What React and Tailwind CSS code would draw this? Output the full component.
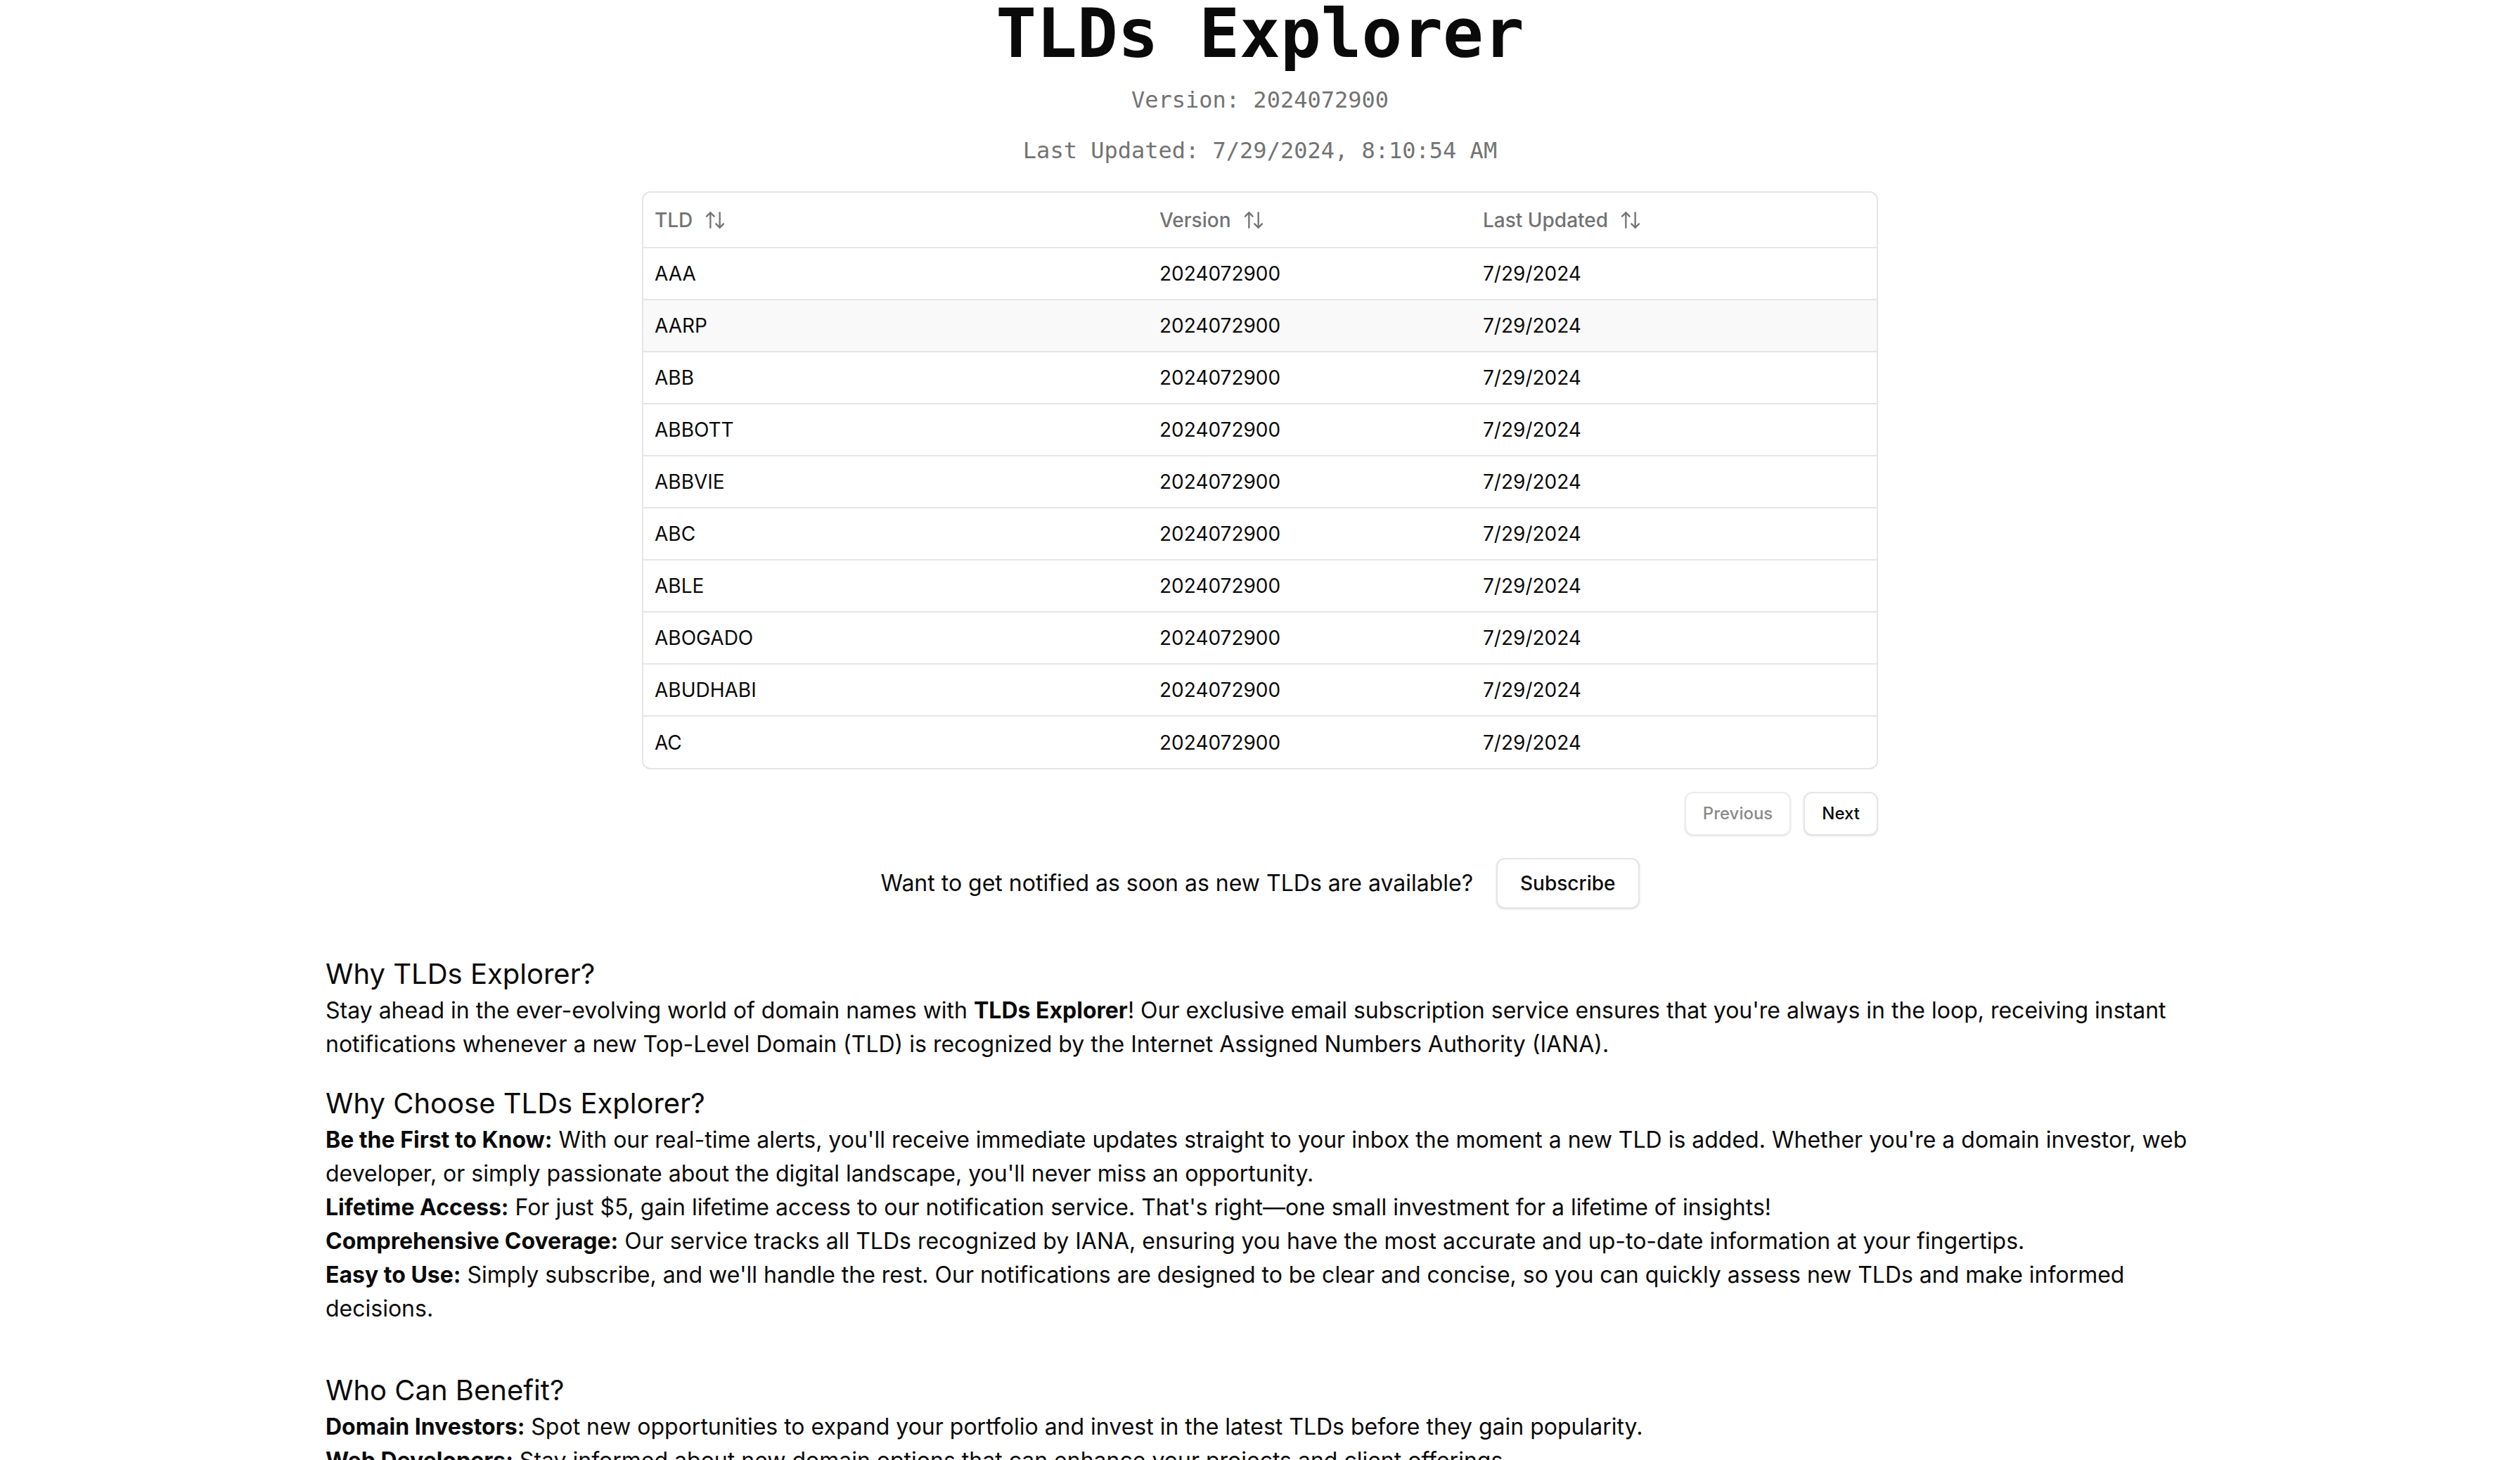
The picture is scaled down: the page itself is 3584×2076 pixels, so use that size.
import { ArrowUpDown } from 'lucide-react'

const tlds = ['AAA', 'AARP', 'ABB', 'ABBOTT', 'ABBVIE', 'ABC', 'ABLE', 'ABOGADO', 'ABUDHABI', 'AC']

function SortHead({ label, className }) {
  return (
    <th className={`h-[78px] px-4 text-left align-middle font-medium text-[#737373] ${className}`}>
      <span className="inline-flex items-center">
        {label}
        <ArrowUpDown className="ml-4 h-8 w-8" strokeWidth={1.75} />
      </span>
    </th>
  )
}

export default function App() {
  return (
    <div className="min-h-screen bg-white font-['Inter',sans-serif] text-[#0a0a0a]">
      <div className="flex flex-col items-center">
        {/* Title block */}
        <h1 className="font-['DejaVu_Sans_Mono',monospace] text-8xl font-bold leading-none">TLDs Explorer</h1>
        <p className="mt-[22px] font-['DejaVu_Sans_Mono',monospace] text-[32px] leading-[48px] text-[#737373]">
          Version: 2024072900
        </p>
        <p className="mt-6 font-['DejaVu_Sans_Mono',monospace] text-[32px] leading-[48px] text-[#737373]">
          Last Updated: 7/29/2024, 8:10:54 AM
        </p>

        {/* Table */}
        <div className="mt-[34px] w-[1758px] overflow-hidden rounded-[12px] border-2 border-[#e5e5e5]">
          <table className="w-full border-collapse text-[28px]">
            <thead>
              <tr className="border-b-2 border-[#e5e5e5]">
                <SortHead label="TLD" className="w-[718px]" />
                <SortHead label="Version" className="w-[460px]" />
                <SortHead label="Last Updated" />
              </tr>
            </thead>
            <tbody>
              {tlds.map((tld, i) => (
                <tr
                  key={tld}
                  className={`${i < tlds.length - 1 ? 'border-b-2 border-[#e5e5e5]' : ''} ${i === 1 ? 'bg-[#f9f9f9]' : ''}`}
                >
                  <td className="h-[74px] px-4 align-middle">{tld}</td>
                  <td className="h-[74px] px-4 align-middle">2024072900</td>
                  <td className="h-[74px] px-4 align-middle">7/29/2024</td>
                </tr>
              ))}
            </tbody>
          </table>
        </div>

        {/* Pagination */}
        <div className="mt-8 flex w-[1758px] items-center justify-end gap-[18px]">
          <button className="h-[62px] rounded-[12px] border-2 border-[#ececec] bg-white px-6 text-[24px] font-medium text-[#8a8a8a] shadow-sm">
            Previous
          </button>
          <button className="h-[62px] rounded-[12px] border-2 border-[#e5e5e5] bg-white px-6 text-[24px] font-medium shadow-sm">
            Next
          </button>
        </div>

        {/* Subscribe */}
        <div className="mt-8 flex items-center gap-[33px]">
          <span className="text-[32px] leading-[48px]">Want to get notified as soon as new TLDs are available?</span>
          <button className="h-[72px] rounded-[12px] border-2 border-[#e5e5e5] bg-white px-8 text-[28px] font-medium shadow-sm">
            Subscribe
          </button>
        </div>

        {/* Marketing copy */}
        <div className="mt-[65px] w-[2658px] text-[32px] leading-[48px]">
          <section>
            <h2 className="text-[40px] leading-[56px]">Why TLDs Explorer?</h2>
            <p>
              Stay ahead in the ever-evolving world of domain names with <strong>TLDs Explorer</strong>! Our exclusive
              email subscription service ensures that you're always in the loop, receiving instant notifications whenever
              a new Top-Level Domain (TLD) is recognized by the Internet Assigned Numbers Authority (IANA).
            </p>
          </section>

          <section className="mt-8">
            <h2 className="text-[40px] leading-[56px]">Why Choose TLDs Explorer?</h2>
            <p>
              <strong>Be the First to Know:</strong> With our real-time alerts, you'll receive immediate updates straight
              to your inbox the moment a new TLD is added. Whether you're a domain investor, web developer, or simply
              passionate about the digital landscape, you'll never miss an opportunity.
            </p>
            <p>
              <strong>Lifetime Access:</strong> For just $5, gain lifetime access to our notification service. That's
              right—one small investment for a lifetime of insights!
            </p>
            <p>
              <strong>Comprehensive Coverage:</strong> Our service tracks all TLDs recognized by IANA, ensuring you have
              the most accurate and up-to-date information at your fingertips.
            </p>
            <p>
              <strong>Easy to Use:</strong> Simply subscribe, and we'll handle the rest. Our notifications are designed
              to be clear and concise, so you can quickly assess new TLDs and make informed decisions.
            </p>
          </section>

          <section className="mt-16 pb-16">
            <h2 className="text-[40px] leading-[56px]">Who Can Benefit?</h2>
            <p>
              <strong>Domain Investors:</strong> Spot new opportunities to expand your portfolio and invest in the latest
              TLDs before they gain popularity.
            </p>
            <p>
              <strong>Web Developers:</strong> Stay informed about new domain options that can enhance your projects and
              client offerings.
            </p>
            <p>
              <strong>Businesses:</strong> Secure your brand on new TLDs before anyone else does.
            </p>
          </section>
        </div>
      </div>
    </div>
  )
}
